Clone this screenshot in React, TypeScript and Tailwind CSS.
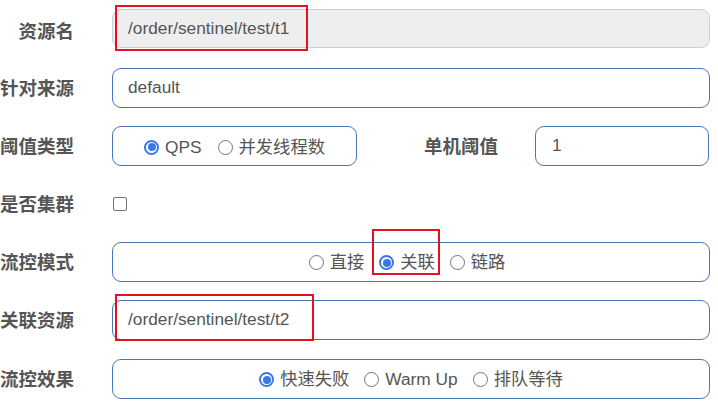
import React from "react";

const cjk = '"Liberation Sans", "Noto Sans CJK SC", sans-serif';

function Label({ text }: { text: string }) {
  return (
    <div
      className="w-[74px] shrink-0 text-right text-[18.5px] font-bold text-[#555] whitespace-nowrap overflow-visible flex justify-end"
      style={{ fontFamily: '"Noto Sans CJK SC", sans-serif' }}
    >
      {text}
    </div>
  );
}

function Radio({ checked }: { checked?: boolean }) {
  return checked ? (
    <span className="w-[15px] h-[15px] rounded-full border-2 border-[#3b78e7] bg-white flex items-center justify-center shrink-0">
      <span className="w-[8px] h-[8px] rounded-full bg-[#3b78e7]" />
    </span>
  ) : (
    <span className="w-[15px] h-[15px] rounded-full border border-[#767676] bg-white shrink-0" />
  );
}

function Option({ label, checked, mark }: { label: string; checked?: boolean; mark?: boolean }) {
  return (
    <span className="relative flex items-center gap-[6px]">
      <Radio checked={checked} />
      <span className="leading-none">{label}</span>
      {mark && (
        <span className="absolute left-[-7px] top-[-25px] w-[68px] h-[46px] border-2 border-[#e5121d]" />
      )}
    </span>
  );
}

export default function App() {
  return (
    <div
      className="w-[718px] h-[404px] bg-white overflow-hidden flex flex-col pt-[9px] text-[17.3px] text-[#555]"
      style={{ fontFamily: cjk }}
    >
      {/* 资源名 */}
      <div className="flex items-center h-[39px]">
        <div className="mt-[5px]">
          <Label text="资源名" />
        </div>
        <div className="relative ml-[38px] w-[598px] h-[39px] rounded-[9px] border border-[#cfcfcf] bg-[#eeeeee] flex items-center pl-[15px]">
          /order/sentinel/test/t1
          <span className="absolute left-[2px] top-[-5px] w-[193px] h-[46px] border-2 border-[#e5121d]" />
        </div>
      </div>

      {/* 针对来源 */}
      <div className="flex items-center h-[39px] mt-[20px]">
        <Label text="针对来源" />
        <div className="ml-[38px] w-[598px] h-[40px] rounded-[9px] border border-[#4a77b4] bg-white flex items-center pl-[15px]">
          default
        </div>
      </div>

      {/* 阈值类型 */}
      <div className="flex items-center h-[39px] mt-[19px]">
        <Label text="阈值类型" />
        <div className="ml-[38px] w-[245px] h-[40px] rounded-[9px] border border-[#4a77b4] bg-white flex items-center justify-center gap-[16px] pt-[4px]">
          <Option label="QPS" checked />
          <Option label="并发线程数" />
        </div>
        <div className="ml-[64px] w-[77px] flex justify-end text-[18.5px] font-bold text-[#555]" style={{ fontFamily: '"Noto Sans CJK SC", sans-serif' }}>
          单机阈值
        </div>
        <div className="ml-[37px] w-[174px] h-[40px] rounded-[9px] border border-[#4a77b4] bg-white flex items-center pl-[16px]">
          1
        </div>
      </div>

      {/* 是否集群 */}
      <div className="flex items-center h-[39px] mt-[19px]">
        <Label text="是否集群" />
        <span className="ml-[39px] mt-[1px] w-[14px] h-[14px] rounded-[2px] border border-[#767676] bg-white" />
      </div>

      {/* 流控模式 */}
      <div className="flex items-center h-[39px] mt-[19px]">
        <Label text="流控模式" />
        <div className="ml-[38px] w-[598px] h-[40px] rounded-[9px] border border-[#4a77b4] bg-white flex items-center justify-center gap-[15px] pt-[3px] pr-[8px]">
          <Option label="直接" />
          <Option label="关联" checked mark />
          <Option label="链路" />
        </div>
      </div>

      {/* 关联资源 */}
      <div className="flex items-center h-[39px] mt-[19px]">
        <Label text="关联资源" />
        <div className="relative ml-[38px] w-[598px] h-[40px] rounded-[9px] border border-[#4a77b4] bg-white flex items-center pl-[15px]">
          /order/sentinel/test/t2
          <span className="absolute left-[2px] top-[-7px] w-[199px] h-[47px] border-2 border-[#e5121d]" />
        </div>
      </div>

      {/* 流控效果 */}
      <div className="flex items-center h-[39px] mt-[20px]">
        <Label text="流控效果" />
        <div className="ml-[38px] w-[598px] h-[40px] rounded-[9px] border border-[#4a77b4] bg-white flex items-center justify-center gap-[15px] pt-[3px]">
          <Option label="快速失败" checked />
          <Option label="Warm Up" />
          <Option label="排队等待" />
        </div>
      </div>
    </div>
  );
}
